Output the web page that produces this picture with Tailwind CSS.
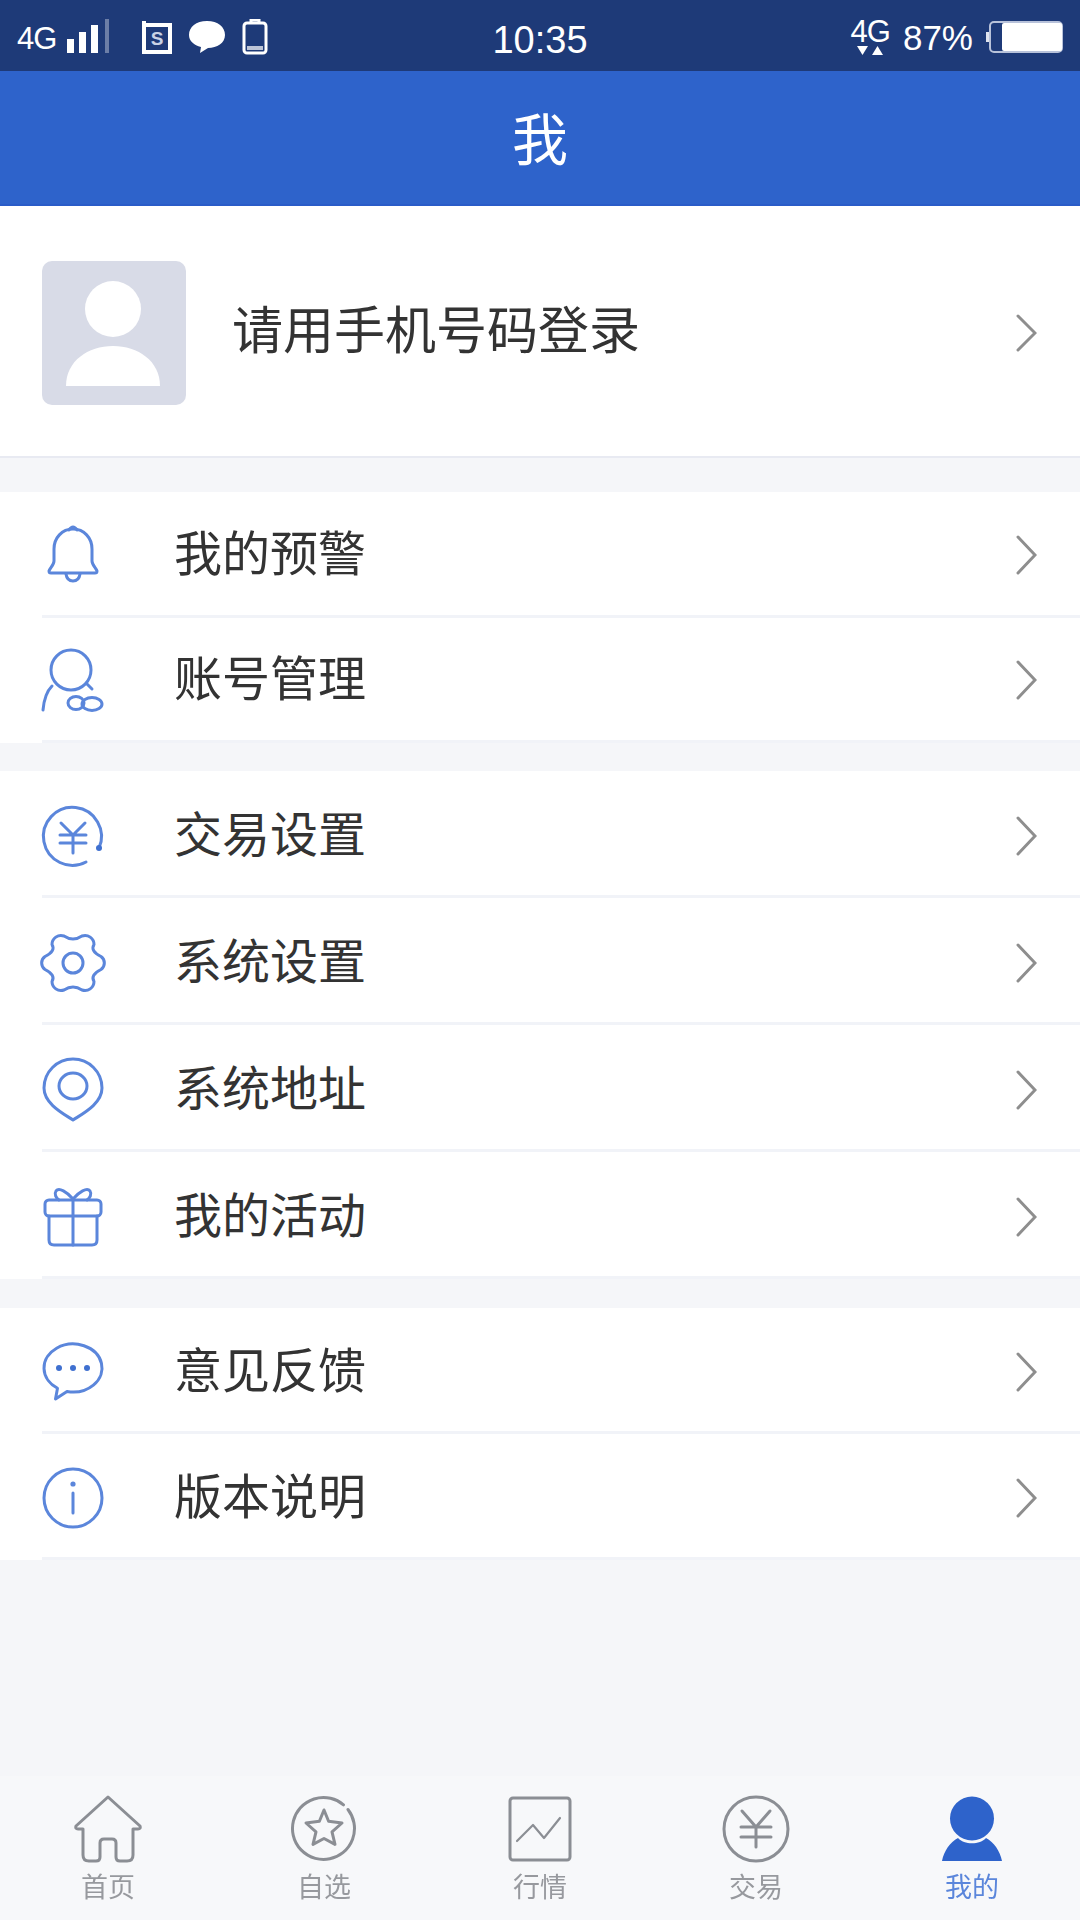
<!DOCTYPE html>
<html lang="zh-CN">
<head>
  <meta charset="UTF-8" />
  <meta name="viewport" content="width=device-width, initial-scale=1.0" />
  <title>我</title>
  <script src="https://cdn.jsdelivr.net/npm/@tailwindcss/browser@4"></script>
</head>
<body class="bg-[#f5f6f9] font-['Liberation_Sans','Noto_Sans_CJK_SC',sans-serif]">
  <div class="w-[1080px] h-[1920px] flex flex-col overflow-hidden blur-[0.6px]">

    <!-- status bar -->
    <div class="h-[71px] shrink-0 bg-[#1e3a78] text-white grid grid-cols-[1fr_auto_1fr] items-center">
      <div class="flex items-center pl-[17px] pt-[2px]">
        <span class="text-[31px] tracking-[-1px] leading-none mt-[3px]">4G</span>
        <svg class="ml-[11px]" width="44" height="36" viewBox="0 0 44 36" fill="#fff">
          <rect x="0" y="20" width="7" height="14" /><rect x="12" y="13" width="7" height="21" /><rect x="24" y="6" width="7" height="28" /><rect x="38" y="0" width="4" height="34" fill="#fff" opacity=".35" />
        </svg>
        <svg class="ml-[30px]" width="32" height="36" viewBox="0 0 32 36" fill="none" stroke="#fff" stroke-width="4">
          <path d="M3 2 L3 33 H29 V6 H3" />
          <text x="16" y="26" text-anchor="middle" font-size="19" font-weight="700" fill="#c9d2e6" stroke="none">S</text>
        </svg>
        <svg class="ml-[15px]" width="38" height="36" viewBox="0 0 38 36" fill="#fff">
          <path d="M19 2 C30 2 37 8 37 16 C37 24 29 29 20 29 L12 34 L13 28 C6 26 1 22 1 16 C1 8 8 2 19 2 Z" />
        </svg>
        <svg class="ml-[16px]" width="26" height="36" viewBox="0 0 26 36" fill="none" stroke="#fff" stroke-width="3">
          <path d="M9 3 V1 H17 V3" /><rect x="2" y="4" width="22" height="30" rx="3" /><rect x="5" y="27" width="16" height="4" fill="#fff" stroke="none" opacity=".7" />
        </svg>
      </div>
      <div class="text-[38px] leading-none mt-[8px]">10:35</div>
      <div class="flex items-center justify-end pr-[16px] pt-[2px]">
        <div class="flex flex-col items-center mr-[13px]">
          <span class="text-[31px] tracking-[-1px] leading-[27px]">4G</span>
          <svg width="28" height="11" viewBox="0 0 28 11" fill="#fff"><path d="M1 1 H12 L6.5 10 Z" /><path d="M16 10 H27 L21.5 1 Z" /></svg>
        </div>
        <span class="text-[35px] leading-none mt-[2px]">87%</span>
        <svg class="ml-[12px]" width="79" height="34" viewBox="0 0 79 34">
          <path d="M1 12 H4 V22 H1 Z" fill="#dfe3ee" />
          <rect x="5" y="2" width="72" height="30" rx="4" fill="none" stroke="#b8c2da" stroke-width="2" />
          <rect x="17" y="3" width="60" height="28" rx="2" fill="#fff" />
        </svg>
      </div>
    </div>

    <!-- title -->
    <div class="h-[135px] shrink-0 bg-[#2e63cb] border-b-[2px] border-[#2a5cc8] flex items-center justify-center pt-[6px] text-white text-[56px]">我</div>

    <!-- login -->
    <div class="h-[252px] shrink-0 bg-white border-b-[2px] border-[#e8eaf2] flex items-center pt-[3px] pl-[42px] pr-[43px]">
      <div class="w-[144px] h-[144px] rounded-[10px] bg-[#d8dbe7] flex items-center justify-center">
        <svg width="144" height="144" viewBox="0 0 144 144" fill="#fff">
          <circle cx="71" cy="48" r="28" />
          <path d="M24 125 C24 100 46 85 71 85 C96 85 118 100 118 125 Z" />
        </svg>
      </div>
      <span class="ml-[46px] text-[51px] text-[#333] flex-1">请用手机号码登录</span>
      <svg width="21" height="38" viewBox="0 0 21 38" fill="none" stroke="#8e8e8e" stroke-width="3" stroke-linecap="round"><path d="M2 2 L19 19 L2 36" /></svg>
    </div>

    <!-- group 1 -->
    <div class="mt-[34px] shrink-0 bg-white">
      <div class="h-[125.5px] ml-[42px] pt-[3px] pr-[43px] border-b-[3px] border-[#f1f3f8] flex items-center">
        <svg class="w-[62px] h-[62px] overflow-visible" viewBox="0 0 62 62" fill="none" stroke="#5b86db" stroke-width="3" stroke-linejoin="round" stroke-linecap="round">
          <path d="M31 5 C20 5 12 14 12 25 V37 C12 41 8 44 7 47 Q7 49 9 49 H53 Q55 49 55 47 C54 44 50 41 50 37 V25 C50 14 42 5 31 5 Z" /><path d="M27 6 Q31 0 35 6" /><path d="M24 50 Q25 57 31 57 Q37 57 38 50" />
        </svg>
        <span class="ml-[70px] flex-1 text-[48px] text-[#333]">我的预警</span>
        <svg width="21" height="40" viewBox="0 0 21 40" fill="none" stroke="#8e8e8e" stroke-width="3" stroke-linecap="round"><path d="M2 2 L19 20 L2 38" /></svg>
      </div>
      <div class="h-[125.5px] ml-[42px] pt-[3px] pr-[43px] border-b-[3px] border-[#f1f3f8] flex items-center">
        <svg class="w-[62px] h-[62px] overflow-visible" viewBox="0 0 62 62" fill="none" stroke="#5b86db" stroke-width="3" stroke-linejoin="round" stroke-linecap="round">
          <circle cx="29" cy="21" r="20" /><path d="M10 37 C5 42 2 50 1 61" /><path d="M45 35 L50 40" /><ellipse cx="34" cy="54" rx="8" ry="6.5" /><ellipse cx="50" cy="55" rx="10" ry="6.5" />
        </svg>
        <span class="ml-[70px] flex-1 text-[48px] text-[#333]">账号管理</span>
        <svg width="21" height="40" viewBox="0 0 21 40" fill="none" stroke="#8e8e8e" stroke-width="3" stroke-linecap="round"><path d="M2 2 L19 20 L2 38" /></svg>
      </div>
    </div>

    <!-- group 2 -->
    <div class="mt-[28px] shrink-0 bg-white">
      <div class="h-[127px] ml-[42px] pt-[5px] pr-[43px] border-b-[3px] border-[#f1f3f8] flex items-center">
        <svg class="w-[62px] h-[62px] overflow-visible" viewBox="0 0 62 62" fill="none" stroke="#5b86db" stroke-width="3" stroke-linejoin="round" stroke-linecap="round">
          <path d="M44 57 A29 29 0 1 1 57 43" /><circle cx="57" cy="43" r="3" fill="#3f70d0" stroke="none" /><path d="M19 18 L31 30 L43 18 M18 30 H44 M18 38 H44 M31 30 V48" />
        </svg>
        <span class="ml-[70px] flex-1 text-[48px] text-[#333]">交易设置</span>
        <svg width="21" height="40" viewBox="0 0 21 40" fill="none" stroke="#8e8e8e" stroke-width="3" stroke-linecap="round"><path d="M2 2 L19 20 L2 38" /></svg>
      </div>
      <div class="h-[127px] ml-[42px] pt-[5px] pr-[43px] border-b-[3px] border-[#f1f3f8] flex items-center">
        <svg class="w-[62px] h-[62px] overflow-visible" viewBox="0 0 62 62" fill="none" stroke="#5b86db" stroke-width="3" stroke-linejoin="round" stroke-linecap="round">
          <path d="M59 24.5 A8 8 0 0 1 59 37.5 Q48 43 52 49.5 A9 9 0 0 1 40 58 Q31 52 22 58 A9 9 0 0 1 10 49.5 Q14 43 3 37.5 A8 8 0 0 1 3 24.5 Q14 19 10 12.5 A9 9 0 0 1 22 4 Q31 10 40 4 A9 9 0 0 1 52 12.5 Q48 19 59 24.5 Z" /><circle cx="31" cy="31" r="10" />
        </svg>
        <span class="ml-[70px] flex-1 text-[48px] text-[#333]">系统设置</span>
        <svg width="21" height="40" viewBox="0 0 21 40" fill="none" stroke="#8e8e8e" stroke-width="3" stroke-linecap="round"><path d="M2 2 L19 20 L2 38" /></svg>
      </div>
      <div class="h-[127px] ml-[42px] pt-[5px] pr-[43px] border-b-[3px] border-[#f1f3f8] flex items-center">
        <svg class="w-[62px] h-[64px] overflow-visible" viewBox="0 0 62 64" fill="none" stroke="#5b86db" stroke-width="3" stroke-linejoin="round" stroke-linecap="round">
          <path d="M31 62 C22 56 2 46 2 30 A29 29 0 0 1 60 30 C60 46 40 56 31 62 Z" /><ellipse cx="31" cy="28" rx="14" ry="13" />
        </svg>
        <span class="ml-[70px] flex-1 text-[48px] text-[#333]">系统地址</span>
        <svg width="21" height="40" viewBox="0 0 21 40" fill="none" stroke="#8e8e8e" stroke-width="3" stroke-linecap="round"><path d="M2 2 L19 20 L2 38" /></svg>
      </div>
      <div class="h-[127px] ml-[42px] pt-[5px] pr-[43px] border-b-[3px] border-[#f1f3f8] flex items-center">
        <svg class="w-[62px] h-[62px] overflow-visible" viewBox="0 0 62 62" fill="none" stroke="#5b86db" stroke-width="3" stroke-linejoin="round" stroke-linecap="round">
          <rect x="3" y="14" width="56" height="16" rx="4" /><path d="M7 30 V54 Q7 59 12 59 H50 Q55 59 55 54 V30" /><path d="M31 14 V59" /><path d="M31 13 C25 6 17 1 14 5 C12 8 14 12 17 14" /><path d="M31 13 C37 6 45 1 48 5 C50 8 48 12 45 14" />
        </svg>
        <span class="ml-[70px] flex-1 text-[48px] text-[#333]">我的活动</span>
        <svg width="21" height="40" viewBox="0 0 21 40" fill="none" stroke="#8e8e8e" stroke-width="3" stroke-linecap="round"><path d="M2 2 L19 20 L2 38" /></svg>
      </div>
    </div>

    <!-- group 3 -->
    <div class="mt-[29px] shrink-0 bg-white">
      <div class="h-[126px] ml-[42px] pt-[5px] pr-[43px] border-b-[3px] border-[#f1f3f8] flex items-center">
        <svg class="w-[62px] h-[62px] overflow-visible" viewBox="0 0 62 62" fill="none" stroke="#5b86db" stroke-width="3" stroke-linejoin="round" stroke-linecap="round">
          <path d="M13.5 58 L15.5 47.28 A29 24 0 1 1 25 50.48 Z" /><circle cx="17" cy="27" r="3" fill="#3f70d0" stroke="none" /><circle cx="31" cy="27" r="3" fill="#3f70d0" stroke="none" /><circle cx="45" cy="27" r="3" fill="#3f70d0" stroke="none" />
        </svg>
        <span class="ml-[70px] flex-1 text-[48px] text-[#333]">意见反馈</span>
        <svg width="21" height="40" viewBox="0 0 21 40" fill="none" stroke="#8e8e8e" stroke-width="3" stroke-linecap="round"><path d="M2 2 L19 20 L2 38" /></svg>
      </div>
      <div class="h-[126px] ml-[42px] pt-[5px] pr-[43px] border-b-[3px] border-[#f1f3f8] flex items-center">
        <svg class="w-[62px] h-[62px] overflow-visible" viewBox="0 0 62 62" fill="none" stroke="#5b86db" stroke-width="3" stroke-linejoin="round" stroke-linecap="round">
          <circle cx="31" cy="31" r="29" /><circle cx="31" cy="17" r="2.6" fill="#5b86db" stroke="none" /><path d="M31 26 V46" />
        </svg>
        <span class="ml-[70px] flex-1 text-[48px] text-[#333]">版本说明</span>
        <svg width="21" height="40" viewBox="0 0 21 40" fill="none" stroke="#8e8e8e" stroke-width="3" stroke-linecap="round"><path d="M2 2 L19 20 L2 38" /></svg>
      </div>
    </div>

    <!-- tab bar -->
    <div class="mt-auto h-[144px] shrink-0 bg-[#f7f8fa] grid grid-cols-5 pt-[19px] text-[27px] leading-[34px] text-[#97999e]">
      <div class="flex flex-col items-center">
        <svg width="70" height="68" viewBox="0 0 70 68" fill="none" stroke="#8b8e94" stroke-width="3" stroke-linejoin="round" stroke-linecap="round">
          <path d="M35 2 L3 31 Q2 34 5 34 H10 V60 Q10 66 16 66 H23 Q27 66 27 62 V48 Q27 44 31 44 H39 Q43 44 43 48 V62 Q43 66 47 66 H54 Q60 66 60 60 V34 H65 Q68 34 67 31 Z" />
        </svg>
        <span class="mt-[8px]">首页</span>
      </div>
      <div class="flex flex-col items-center">
        <svg width="68" height="68" viewBox="0 0 68 68" fill="none" stroke="#8b8e94" stroke-width="3" stroke-linejoin="round" stroke-linecap="round">
          <path d="M58 14.5 A31 31 0 1 1 53.5 9.8" /><path d="M34 15 L38.6 26.3 L52 28 L42 36.9 L45 49.4 L34 43.5 L23 49.4 L26 36.9 L16 28 L29.4 26.3 Z" />
        </svg>
        <span class="mt-[8px]">自选</span>
      </div>
      <div class="flex flex-col items-center">
        <svg width="68" height="68" viewBox="0 0 68 68" fill="none" stroke="#8b8e94" stroke-width="3" stroke-linejoin="round" stroke-linecap="round">
          <rect x="4" y="3" width="60" height="62" rx="3" /><path d="M11 46 L27 30 L38 43 L54 23" stroke-width="2.2" />
        </svg>
        <span class="mt-[8px]">行情</span>
      </div>
      <div class="flex flex-col items-center">
        <svg width="68" height="68" viewBox="0 0 68 68" fill="none" stroke="#8b8e94" stroke-width="3" stroke-linejoin="round" stroke-linecap="round">
          <circle cx="34" cy="34" r="32" /><path d="M20 16 L34 32 L48 16 M19 32 H49 M19 42 H49 M34 32 V52" />
        </svg>
        <span class="mt-[8px]">交易</span>
      </div>
      <div class="flex flex-col items-center">
        <svg width="68" height="68" viewBox="0 0 68 68" fill="#2e63cb">
          <circle cx="34" cy="23.5" r="22" /><path d="M4 66 C6 56 12 47 20 43 C26 50 42 50 48 43 C56 47 62 56 64 66 Z" />
        </svg>
        <span class="mt-[8px] text-[#5b86db]">我的</span>
      </div>
    </div>
  </div>
</body>
</html>
